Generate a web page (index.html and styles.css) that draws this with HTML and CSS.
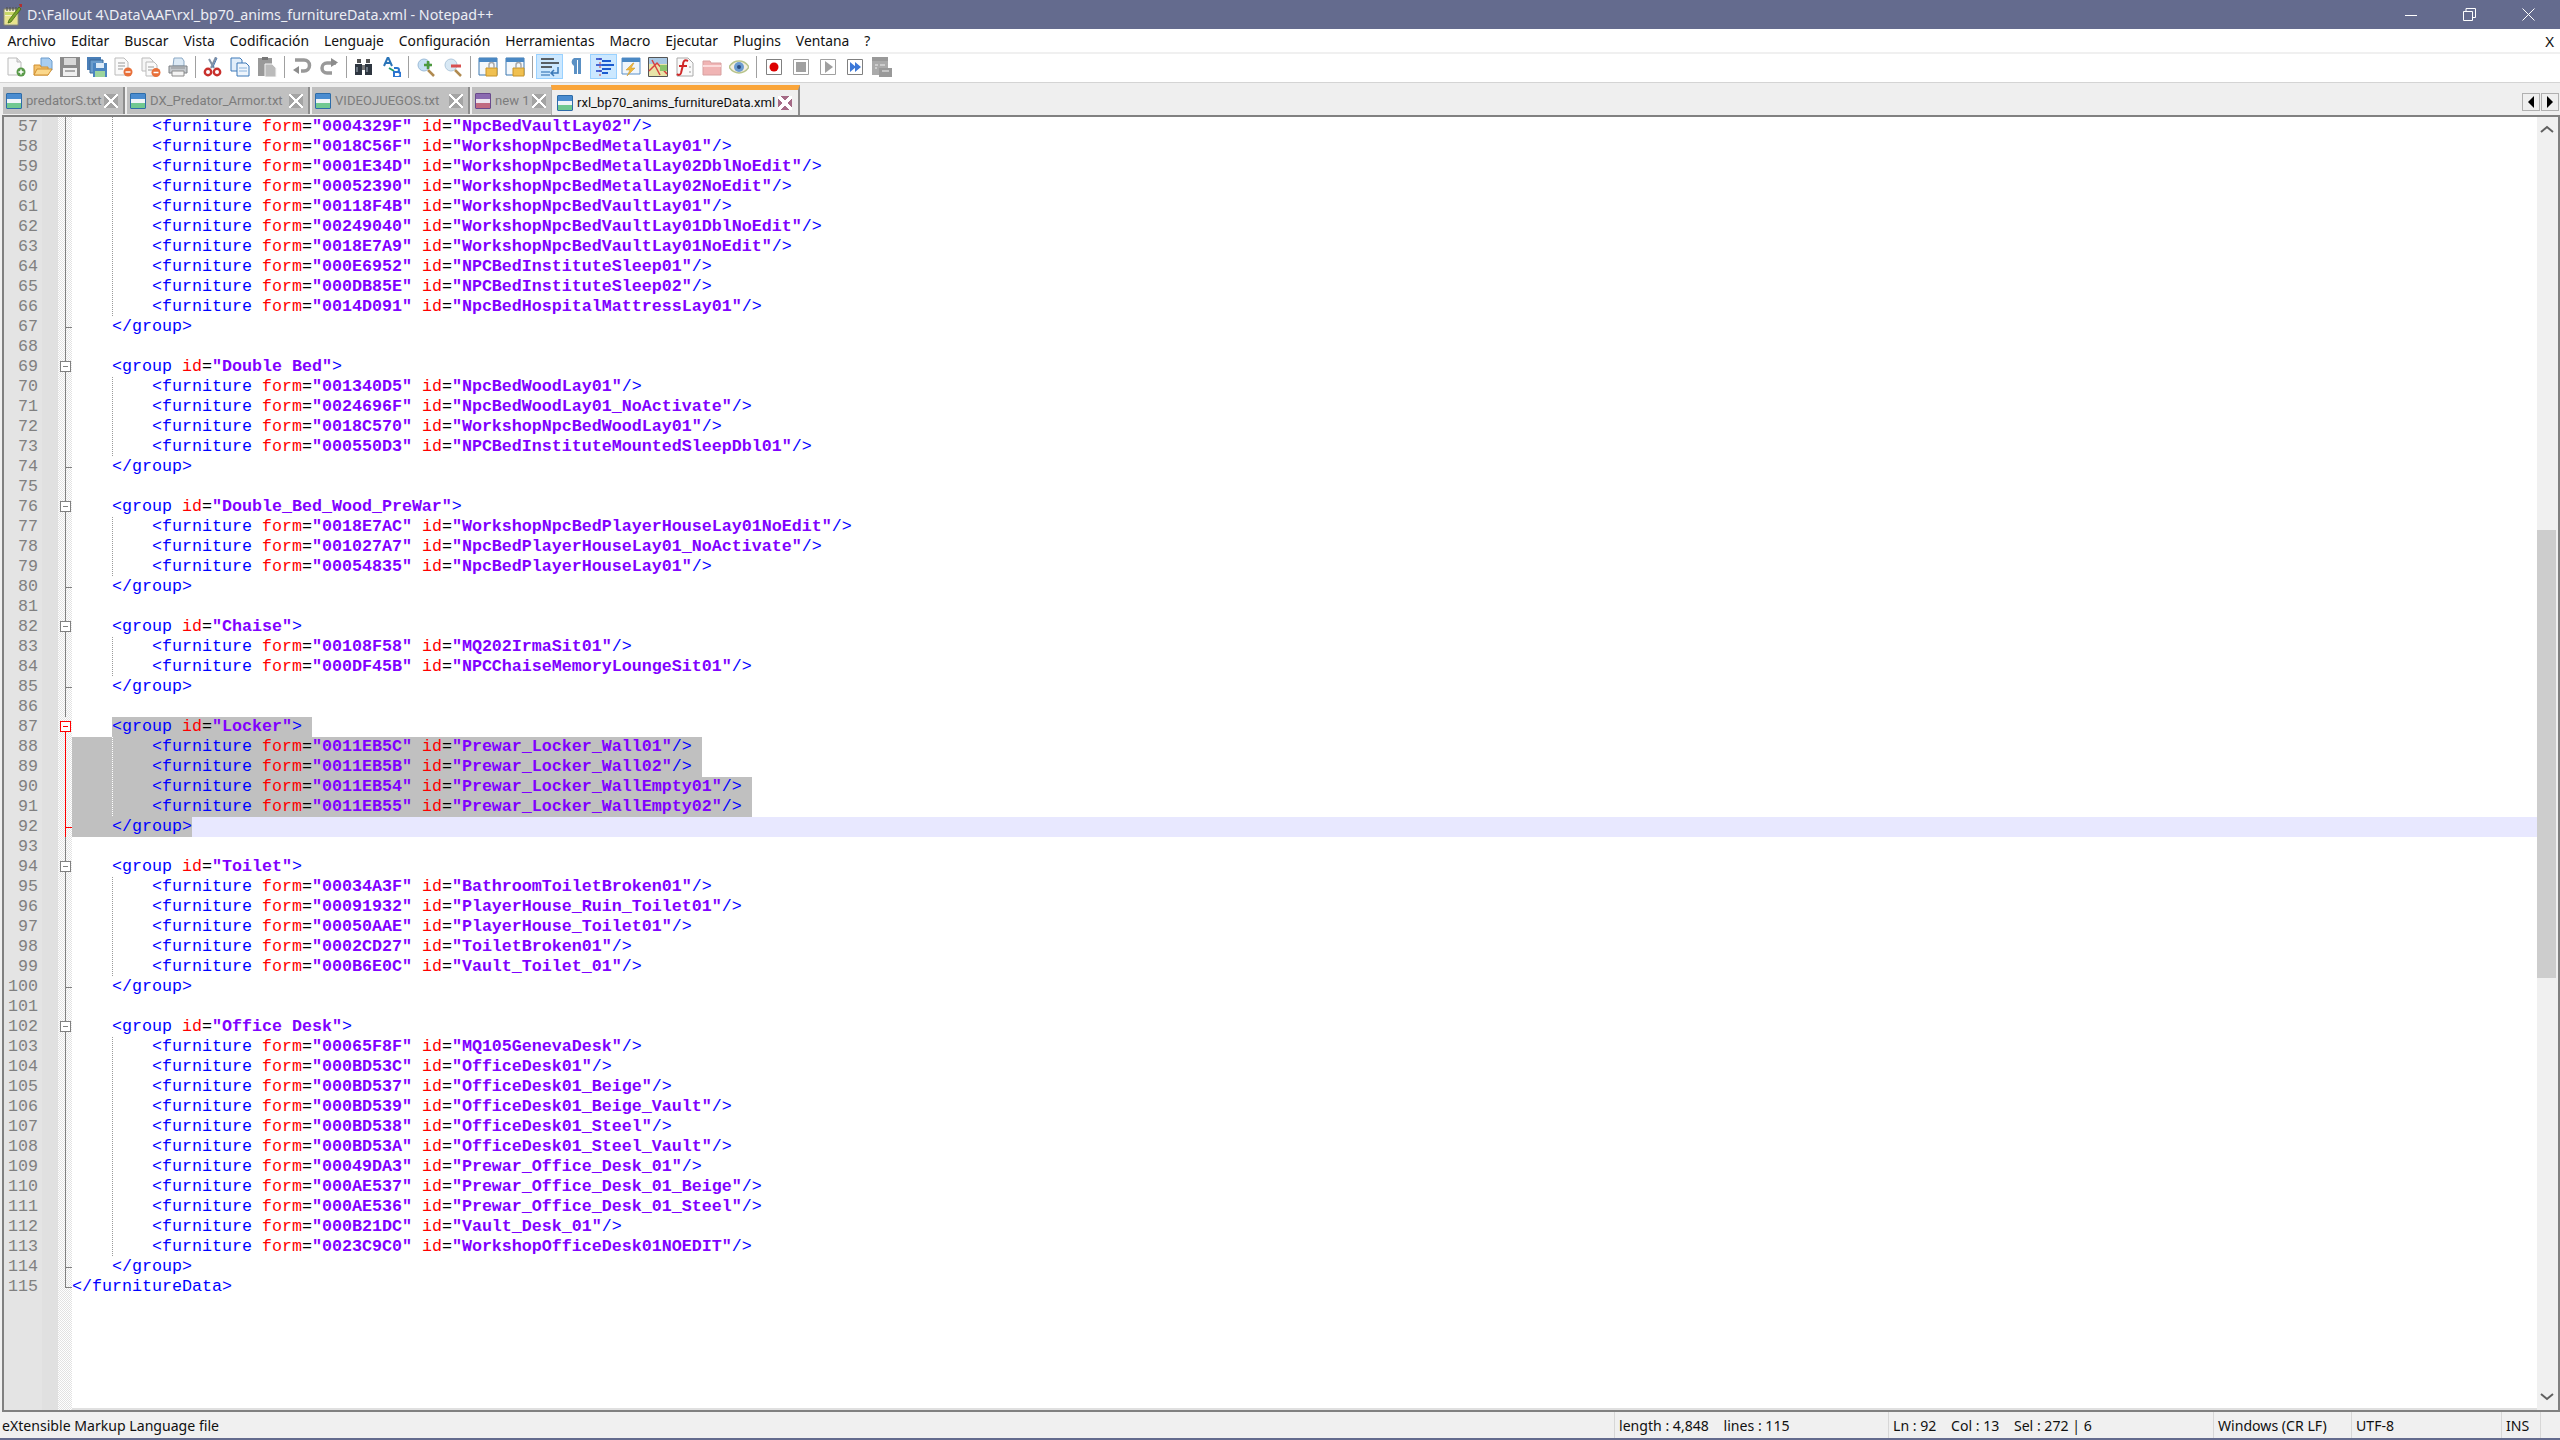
FILE: index.html
```html
<!DOCTYPE html>
<html lang="es">
<head>
    <meta charset="UTF-8">
    <title>rxl_bp70_anims_furnitureData.xml - Notepad++</title>
    <link rel="stylesheet" href="styles.css">
</head>
<body>
<div class="app">

    <!-- TITLE BAR -->
    <div class="titlebar">
        <svg class="app_icon" width="20" height="24" viewBox="0 0 20 24"><path d="M2 6h14v16H2z" fill="#f4f0c8" stroke="#8a8a60"/><path d="M3 9h12v3H3z" fill="#c8d868"/><path d="M3 13h12v8H3z" fill="#e8e48c"/><path d="M5 4v4M8 4v4M11 4v4M14 4v4" stroke="#555" stroke-width="1.2"/><path d="M7 17L17 4l2 2L9 19l-3 1z" fill="#7aa52a" stroke="#3c5c10" stroke-width=".7"/><path d="M17 1h3v3h-2z" fill="#b03030"/></svg>
        <span class="title_text">D:\Fallout 4\Data\AAF\rxl_bp70_anims_furnitureData.xml - Notepad++</span>
        <div class="win_btns">
            <svg width="12" height="12" viewBox="0 0 12 12"><path d="M0 6.5h12" stroke="#fff"/></svg>
            <svg width="13" height="13" viewBox="0 0 13 13"><path d="M.5 3.5h9v9h-9zM3 3.5V.5h9.500v9h-3" fill="none" stroke="#fff"/></svg>
            <svg width="13" height="13" viewBox="0 0 13 13"><path d="M.5.5l12 12M12.500.5l-12 12" stroke="#fff"/></svg>
        </div>
    </div>

    <!-- MENU -->
    <div class="menubar">
        <a>Archivo</a><a>Editar</a><a>Buscar</a><a>Vista</a><a>Codificación</a><a>Lenguaje</a><a>Configuración</a><a>Herramientas</a><a>Macro</a><a>Ejecutar</a><a>Plugins</a><a>Ventana</a><a>?</a>
        <span class="menu_x">X</span>
    </div>

    <!-- TOOLBAR -->
    <div class="toolbar">
        <span class="tb"><svg viewBox="0 0 20 20"><path d="M2 1h9l4 4v13H2z" fill="#fbfbfb" stroke="#bbb"/><path d="M11 1v4h4" fill="#e4e4e4" stroke="#bbb"/><circle cx="15" cy="15" r="4.500" fill="#5a9a4a"/><path d="M15 12.500v5M12.500 15h5" stroke="#fff" stroke-width="1.500"/></svg></span>
        <span class="tb"><svg viewBox="0 0 20 20"><path d="M8 1h8l3 3v9H8z" fill="#a8cdf0" stroke="#6c9ccc"/><path d="M1 8h6l1 2h7v8H1z" fill="#f4c26c" stroke="#d09030"/><path d="M1 18l3-6h15l-4 6z" fill="#fbd88c" stroke="#d09030"/></svg></span>
        <span class="tb"><svg viewBox="0 0 20 20"><path d="M0 0h20v20H0z" fill="#8c8c8c"/><path d="M4 1h12v7H4z" fill="#d8d8d8"/><path d="M3 11h14v8H3z" fill="#f0f0f0"/><path d="M5 14h10" stroke="#aaa" stroke-width="2"/></svg></span>
        <span class="tb"><svg viewBox="0 0 20 20"><path d="M0 0h14v13H0z" fill="#4a7fb8"/><path d="M3 3h13v13H3z" fill="#6a9ccc" stroke="#3a6a9c"/><path d="M6 6h14v14H6z" fill="#4a84c0"/><path d="M9 6h8v5H9z" fill="#dcebf8"/><path d="M8 14h10v6H8z" fill="#9cd49c"/></svg></span>
        <span class="tb"><svg viewBox="0 0 20 20"><path d="M1 1h9l4 4v13H1z" fill="#fafafa" stroke="#bbb"/><path d="M4 6h7M4 9h7M4 12h5" stroke="#999"/><circle cx="14" cy="15" r="4.500" fill="#e8703a"/><path d="M11.500 15h5" stroke="#fff" stroke-width="1.500"/></svg></span>
        <span class="tb"><svg viewBox="0 0 20 20"><path d="M1 1h8l3 3v10H1z" fill="#f6f6f6" stroke="#bbb"/><path d="M5 5h8l3 3v11H5z" fill="#fafafa" stroke="#bbb"/><path d="M7 10h6M7 13h4" stroke="#999"/><circle cx="15" cy="15.500" r="4.500" fill="#e8703a"/><path d="M12.500 15.500h5" stroke="#fff" stroke-width="1.500"/></svg></span>
        <span class="tb"><svg viewBox="0 0 20 20"><path d="M6 1h8l2 3v5H5z" fill="#dceaf6" stroke="#8aa8c4"/><path d="M1 9h18v7H1z" fill="#c4c8cc" stroke="#7c8084"/><path d="M4 14h12v5H4z" fill="#f4f4f4" stroke="#8c8c8c"/><path d="M3 11h14" stroke="#8c9094"/></svg></span>
        <span class="sep"></span>
        <span class="tb"><svg viewBox="0 0 20 20"><path d="M13 0L8 11M6 2l5 9" stroke="#8090a4" stroke-width="2"/><path d="M14 1l-4 9" stroke="#4a78b0"/><circle cx="5" cy="15" r="3.200" fill="none" stroke="#c8302c" stroke-width="2.400"/><circle cx="14" cy="15" r="3.200" fill="none" stroke="#c8302c" stroke-width="2.400"/></svg></span>
        <span class="tb"><svg viewBox="0 0 20 20"><path d="M1 1h9l2 2v11H1z" fill="#e2eefa" stroke="#3c78b8"/><path d="M7 6h9l3 3v10H7z" fill="#eef5fc" stroke="#3c78b8"/><path d="M9 11h8M9 14h8" stroke="#8cb4dc"/></svg></span>
        <span class="tb"><svg viewBox="0 0 20 20"><path d="M1 1h14v18H1z" fill="#999"/><path d="M5 0h6v3H5z" fill="#777"/><path d="M8 7h7l4 4v9H8z" fill="#bbb" stroke="#f4f4f4"/></svg></span>
        <span class="sep"></span>
        <span class="tb"><svg viewBox="0 0 20 20"><path d="M3 3h9a5 5 0 0 1 0 11H9" fill="none" stroke="#999" stroke-width="3.500"/><path d="M7 9v8l-6-4z" fill="#8c8c8c"/></svg></span>
        <span class="tb"><svg viewBox="0 0 20 20"><path d="M17 6H8a4.500 4.500 0 0 0 0 10h5" fill="none" stroke="#999" stroke-width="3.500"/><path d="M12 1v9l7-4.500z" fill="#8c8c8c"/></svg></span>
        <span class="sep"></span>
        <span class="tb"><svg viewBox="0 0 20 20"><path d="M3 2h4v4H3zM12 2h4v4h-4z" fill="#555"/><path d="M1 7h7v11H1zM11 7h7v11h-7z" fill="#2e3640"/><path d="M8 8h3v5H8z" fill="#777"/><path d="M3 10v5M13 10v5" stroke="#a8b4c0"/></svg></span>
        <span class="tb"><svg viewBox="0 0 20 20"><path d="M3 9L7 0l4 9M5 6h4" fill="none" stroke="#2a74b8" stroke-width="2"/><path d="M8 11l5 3" stroke="#1f9a70" stroke-width="2"/><path d="M13 11h3a2 2 0 0 1 0 4h-3v5h4a2.500 2.500 0 0 0 0-5" fill="none" stroke="#2a74d0" stroke-width="2"/></svg></span>
        <span class="sep"></span>
        <span class="tb"><svg viewBox="0 0 20 20"><circle cx="8" cy="8" r="6" fill="#c8e0f4" stroke="#9cbcd8"/><path d="M12 13l6 6" stroke="#b08a50" stroke-width="2.500"/><path d="M8 8h8M12 4v8" stroke="#4e9a3e" stroke-width="2.500"/></svg></span>
        <span class="tb"><svg viewBox="0 0 20 20"><circle cx="8" cy="8" r="6" fill="#d8e8f4" stroke="#b0c8dc"/><path d="M12 13l6 6" stroke="#b08a50" stroke-width="2.500"/><path d="M8 9h10" stroke="#d85050" stroke-width="3"/></svg></span>
        <span class="sep"></span>
        <span class="tb"><svg viewBox="0 0 20 20"><path d="M1 1h18v17H1z" fill="#f4f8fc" stroke="#3c78b0"/><path d="M1 1h18v4H1z" fill="#4a88c4"/><path d="M8 11h11v8H8z" fill="#f0c050" stroke="#c89428"/><path d="M11 11V8a2.500 2.500 0 0 1 5 0v3" fill="none" stroke="#aaa" stroke-width="1.500"/></svg></span>
        <span class="tb"><svg viewBox="0 0 20 20"><path d="M1 1h18v17H1z" fill="#f4f8fc" stroke="#3c78b0"/><path d="M1 1h18v4H1z" fill="#4a88c4"/><path d="M8 11h11v8H8z" fill="#f0c050" stroke="#c89428"/><path d="M11 11V8a2.500 2.500 0 0 1 5 0v3" fill="none" stroke="#aaa" stroke-width="1.500"/></svg></span>
        <span class="sep"></span>
        <span class="tb on"><svg viewBox="0 0 20 20"><path d="M1 2h13M1 6h18M1 10h11" stroke="#333" stroke-width="1.500"/><path d="M1 15h9M1 18h9" stroke="#5a90c8" stroke-width="1.500"/><path d="M18 10v6h-6M14 13l-3 3 3 3" fill="none" stroke="#3a78b8" stroke-width="1.500"/></svg></span>
        <span class="tb"><svg viewBox="0 0 20 20"><path d="M7 17V9a4.500 4.500 0 0 1 0-8h7v16h-3V3h-1v14z" fill="#5a90c4"/></svg></span>
        <span class="tb on"><svg viewBox="0 0 20 20"><path d="M6 1v18" stroke="#d04040" stroke-dasharray="2 2"/><path d="M2 2h6M2 8h6M2 14h6" stroke="#1c3cc8" stroke-width="1.500"/><path d="M8 4h9M8 8h15M8 12h9M8 16h6" stroke="#1c5cd0" stroke-width="2"/></svg></span>
        <span class="tb"><svg viewBox="0 0 20 20"><path d="M1 1h18v16H1z" fill="#f0f6fc" stroke="#5a90c8"/><path d="M1 1h18v4H1z" fill="#4a88c4"/><path d="M12 6L5 13h4l-3 6 8-8h-4l3-5z" fill="#f0b83c" stroke="#c89428" stroke-width=".5"/></svg></span>
        <span class="tb"><svg viewBox="0 0 20 20"><path d="M.500.500h19v19H.500z" fill="#e8e4a8" stroke="#555"/><path d="M1 1h18v6H1z" fill="#a8c8e4"/><path d="M1 14l8-8 10 11M4 3l8 15" fill="none" stroke="#d84040" stroke-width="1.500"/><path d="M12 8h7v6h-7z" fill="#8ac46c"/></svg></span>
        <span class="tb"><svg viewBox="0 0 20 20"><path d="M2 1h11l5 5v13H2z" fill="#fafafa" stroke="#aaa"/><path d="M13 4c-4-2-5 1-5 4l-2 8c-1 3-3 2-4 1M4 9h8" fill="none" stroke="#d02828" stroke-width="2"/><path d="M15 9v2M15 14v2" stroke="#999"/></svg></span>
        <span class="tb"><svg viewBox="0 0 20 20"><path d="M1 4h7l1 2h10v12H1z" fill="#f0b4b4" stroke="#d8a0a0"/><path d="M1 9h18" stroke="#fbdcdc" stroke-width="2"/></svg></span>
        <span class="tb"><svg viewBox="0 0 20 20"><path d="M0 10c5-8 15-8 20 0-5 8-15 8-20 0z" fill="#f4efe0" stroke="#b8c48c" stroke-width="1.500"/><circle cx="10" cy="10" r="5" fill="#6c9cd0"/><circle cx="10" cy="10" r="2" fill="#2c4c80"/></svg></span>
        <span class="sep"></span>
        <span class="tb"><svg viewBox="0 0 20 20"><path d="M2.500 2.500h15v15h-15z" fill="#fff" stroke="#808080"/><circle cx="10" cy="10" r="4.500" fill="#d00"/></svg></span>
        <span class="tb"><svg viewBox="0 0 20 20"><path d="M2.500 2.500h15v15h-15z" fill="#fff" stroke="#a0a0a0"/><path d="M5 5h10v10H5z" fill="#a0a0a0"/></svg></span>
        <span class="tb"><svg viewBox="0 0 20 20"><path d="M2.500 2.500h15v15h-15z" fill="#fff" stroke="#a0a0a0"/><path d="M7 4l8 6-8 6z" fill="#a0a0a0"/></svg></span>
        <span class="tb"><svg viewBox="0 0 20 20"><path d="M2.500 2.500h15v15h-15z" fill="#fff" stroke="#808080"/><path d="M5 5l6 5-6 5zM10 5l6 5-6 5z" fill="#3c78d8"/></svg></span>
        <span class="tb"><svg viewBox="0 0 20 20"><path d="M0 0h16v4H0z" fill="#999"/><path d="M0 4h16v14H0z" fill="#aaa"/><path d="M3 8h3M3 11h2M8 8h5" stroke="#eee"/><path d="M7 11h13v9H7z" fill="#999"/><path d="M10 14h7" stroke="#eee"/></svg></span>
    </div>

    <!-- TABS -->
    <div class="tabbar">
        <div class="tab t1"><span class="floppy"></span>predatorS.txt<span class="tab_x"></span></div>
        <div class="tab t2"><span class="floppy"></span>DX_Predator_Armor.txt<span class="tab_x"></span></div>
        <div class="tab t3"><span class="floppy"></span>VIDEOJUEGOS.txt<span class="tab_x"></span></div>
        <div class="tab t4"><span class="floppy dirty"></span>new 1<span class="tab_x"></span></div>
        <div class="tab active"><span class="floppy"></span>rxl_bp70_anims_furnitureData.xml<span class="tab_x"></span></div>
        <div class="tab_arrows">
            <span class="arrow"><svg width="6" height="12" viewBox="0 0 6 12"><path d="M6 0v12L0 6z"/></svg></span>
            <span class="arrow"><svg width="6" height="12" viewBox="0 0 6 12"><path d="M0 0v12l6-6z"/></svg></span>
        </div>
    </div>

    <!-- EDITOR -->
    <div class="editor">
        <div class="lines">
<div class="row in"><span class="num">57</span><span class="fold"></span><pre class="code">        <span class="t">&lt;furniture</span> <span class="a">form</span>=<span class="v">"0004329F"</span> <span class="a">id</span>=<span class="v">"NpcBedVaultLay02"</span><span class="t">/&gt;</span></pre></div>
<div class="row in"><span class="num">58</span><span class="fold"></span><pre class="code">        <span class="t">&lt;furniture</span> <span class="a">form</span>=<span class="v">"0018C56F"</span> <span class="a">id</span>=<span class="v">"WorkshopNpcBedMetalLay01"</span><span class="t">/&gt;</span></pre></div>
<div class="row in"><span class="num">59</span><span class="fold"></span><pre class="code">        <span class="t">&lt;furniture</span> <span class="a">form</span>=<span class="v">"0001E34D"</span> <span class="a">id</span>=<span class="v">"WorkshopNpcBedMetalLay02DblNoEdit"</span><span class="t">/&gt;</span></pre></div>
<div class="row in"><span class="num">60</span><span class="fold"></span><pre class="code">        <span class="t">&lt;furniture</span> <span class="a">form</span>=<span class="v">"00052390"</span> <span class="a">id</span>=<span class="v">"WorkshopNpcBedMetalLay02NoEdit"</span><span class="t">/&gt;</span></pre></div>
<div class="row in"><span class="num">61</span><span class="fold"></span><pre class="code">        <span class="t">&lt;furniture</span> <span class="a">form</span>=<span class="v">"00118F4B"</span> <span class="a">id</span>=<span class="v">"WorkshopNpcBedVaultLay01"</span><span class="t">/&gt;</span></pre></div>
<div class="row in"><span class="num">62</span><span class="fold"></span><pre class="code">        <span class="t">&lt;furniture</span> <span class="a">form</span>=<span class="v">"00249040"</span> <span class="a">id</span>=<span class="v">"WorkshopNpcBedVaultLay01DblNoEdit"</span><span class="t">/&gt;</span></pre></div>
<div class="row in"><span class="num">63</span><span class="fold"></span><pre class="code">        <span class="t">&lt;furniture</span> <span class="a">form</span>=<span class="v">"0018E7A9"</span> <span class="a">id</span>=<span class="v">"WorkshopNpcBedVaultLay01NoEdit"</span><span class="t">/&gt;</span></pre></div>
<div class="row in"><span class="num">64</span><span class="fold"></span><pre class="code">        <span class="t">&lt;furniture</span> <span class="a">form</span>=<span class="v">"000E6952"</span> <span class="a">id</span>=<span class="v">"NPCBedInstituteSleep01"</span><span class="t">/&gt;</span></pre></div>
<div class="row in"><span class="num">65</span><span class="fold"></span><pre class="code">        <span class="t">&lt;furniture</span> <span class="a">form</span>=<span class="v">"000DB85E"</span> <span class="a">id</span>=<span class="v">"NPCBedInstituteSleep02"</span><span class="t">/&gt;</span></pre></div>
<div class="row in"><span class="num">66</span><span class="fold"></span><pre class="code">        <span class="t">&lt;furniture</span> <span class="a">form</span>=<span class="v">"0014D091"</span> <span class="a">id</span>=<span class="v">"NpcBedHospitalMattressLay01"</span><span class="t">/&gt;</span></pre></div>
<div class="row"><span class="num">67</span><span class="fold tick"></span><pre class="code">    <span class="t">&lt;/group&gt;</span></pre></div>
<div class="row"><span class="num">68</span><span class="fold"></span><pre class="code"></pre></div>
<div class="row"><span class="num">69</span><span class="fold box"></span><pre class="code">    <span class="t">&lt;group</span> <span class="a">id</span>=<span class="v">"Double Bed"</span><span class="t">&gt;</span></pre></div>
<div class="row in"><span class="num">70</span><span class="fold"></span><pre class="code">        <span class="t">&lt;furniture</span> <span class="a">form</span>=<span class="v">"001340D5"</span> <span class="a">id</span>=<span class="v">"NpcBedWoodLay01"</span><span class="t">/&gt;</span></pre></div>
<div class="row in"><span class="num">71</span><span class="fold"></span><pre class="code">        <span class="t">&lt;furniture</span> <span class="a">form</span>=<span class="v">"0024696F"</span> <span class="a">id</span>=<span class="v">"NpcBedWoodLay01_NoActivate"</span><span class="t">/&gt;</span></pre></div>
<div class="row in"><span class="num">72</span><span class="fold"></span><pre class="code">        <span class="t">&lt;furniture</span> <span class="a">form</span>=<span class="v">"0018C570"</span> <span class="a">id</span>=<span class="v">"WorkshopNpcBedWoodLay01"</span><span class="t">/&gt;</span></pre></div>
<div class="row in"><span class="num">73</span><span class="fold"></span><pre class="code">        <span class="t">&lt;furniture</span> <span class="a">form</span>=<span class="v">"000550D3"</span> <span class="a">id</span>=<span class="v">"NPCBedInstituteMountedSleepDbl01"</span><span class="t">/&gt;</span></pre></div>
<div class="row"><span class="num">74</span><span class="fold tick"></span><pre class="code">    <span class="t">&lt;/group&gt;</span></pre></div>
<div class="row"><span class="num">75</span><span class="fold"></span><pre class="code"></pre></div>
<div class="row"><span class="num">76</span><span class="fold box"></span><pre class="code">    <span class="t">&lt;group</span> <span class="a">id</span>=<span class="v">"Double_Bed_Wood_PreWar"</span><span class="t">&gt;</span></pre></div>
<div class="row in"><span class="num">77</span><span class="fold"></span><pre class="code">        <span class="t">&lt;furniture</span> <span class="a">form</span>=<span class="v">"0018E7AC"</span> <span class="a">id</span>=<span class="v">"WorkshopNpcBedPlayerHouseLay01NoEdit"</span><span class="t">/&gt;</span></pre></div>
<div class="row in"><span class="num">78</span><span class="fold"></span><pre class="code">        <span class="t">&lt;furniture</span> <span class="a">form</span>=<span class="v">"001027A7"</span> <span class="a">id</span>=<span class="v">"NpcBedPlayerHouseLay01_NoActivate"</span><span class="t">/&gt;</span></pre></div>
<div class="row in"><span class="num">79</span><span class="fold"></span><pre class="code">        <span class="t">&lt;furniture</span> <span class="a">form</span>=<span class="v">"00054835"</span> <span class="a">id</span>=<span class="v">"NpcBedPlayerHouseLay01"</span><span class="t">/&gt;</span></pre></div>
<div class="row"><span class="num">80</span><span class="fold tick"></span><pre class="code">    <span class="t">&lt;/group&gt;</span></pre></div>
<div class="row"><span class="num">81</span><span class="fold"></span><pre class="code"></pre></div>
<div class="row"><span class="num">82</span><span class="fold box"></span><pre class="code">    <span class="t">&lt;group</span> <span class="a">id</span>=<span class="v">"Chaise"</span><span class="t">&gt;</span></pre></div>
<div class="row in"><span class="num">83</span><span class="fold"></span><pre class="code">        <span class="t">&lt;furniture</span> <span class="a">form</span>=<span class="v">"00108F58"</span> <span class="a">id</span>=<span class="v">"MQ202IrmaSit01"</span><span class="t">/&gt;</span></pre></div>
<div class="row in"><span class="num">84</span><span class="fold"></span><pre class="code">        <span class="t">&lt;furniture</span> <span class="a">form</span>=<span class="v">"000DF45B"</span> <span class="a">id</span>=<span class="v">"NPCChaiseMemoryLoungeSit01"</span><span class="t">/&gt;</span></pre></div>
<div class="row"><span class="num">85</span><span class="fold tick"></span><pre class="code">    <span class="t">&lt;/group&gt;</span></pre></div>
<div class="row"><span class="num">86</span><span class="fold"></span><pre class="code"></pre></div>
<div class="row"><span class="num">87</span><span class="fold box red"></span><pre class="code">    <span class="sel eol"><span class="t">&lt;group</span> <span class="a">id</span>=<span class="v">"Locker"</span><span class="t">&gt;</span></span></pre></div>
<div class="row in chosen"><span class="num">88</span><span class="fold red"></span><pre class="code"><span class="sel eol">        <span class="t">&lt;furniture</span> <span class="a">form</span>=<span class="v">"0011EB5C"</span> <span class="a">id</span>=<span class="v">"Prewar_Locker_Wall01"</span><span class="t">/&gt;</span></span></pre></div>
<div class="row in chosen"><span class="num">89</span><span class="fold red"></span><pre class="code"><span class="sel eol">        <span class="t">&lt;furniture</span> <span class="a">form</span>=<span class="v">"0011EB5B"</span> <span class="a">id</span>=<span class="v">"Prewar_Locker_Wall02"</span><span class="t">/&gt;</span></span></pre></div>
<div class="row in chosen"><span class="num">90</span><span class="fold red"></span><pre class="code"><span class="sel eol">        <span class="t">&lt;furniture</span> <span class="a">form</span>=<span class="v">"0011EB54"</span> <span class="a">id</span>=<span class="v">"Prewar_Locker_WallEmpty01"</span><span class="t">/&gt;</span></span></pre></div>
<div class="row in chosen"><span class="num">91</span><span class="fold red"></span><pre class="code"><span class="sel eol">        <span class="t">&lt;furniture</span> <span class="a">form</span>=<span class="v">"0011EB55"</span> <span class="a">id</span>=<span class="v">"Prewar_Locker_WallEmpty02"</span><span class="t">/&gt;</span></span></pre></div>
<div class="row current"><span class="num">92</span><span class="fold tick red"></span><pre class="code"><span class="sel">    <span class="t">&lt;/group&gt;</span></span></pre></div>
<div class="row"><span class="num">93</span><span class="fold"></span><pre class="code"></pre></div>
<div class="row"><span class="num">94</span><span class="fold box"></span><pre class="code">    <span class="t">&lt;group</span> <span class="a">id</span>=<span class="v">"Toilet"</span><span class="t">&gt;</span></pre></div>
<div class="row in"><span class="num">95</span><span class="fold"></span><pre class="code">        <span class="t">&lt;furniture</span> <span class="a">form</span>=<span class="v">"00034A3F"</span> <span class="a">id</span>=<span class="v">"BathroomToiletBroken01"</span><span class="t">/&gt;</span></pre></div>
<div class="row in"><span class="num">96</span><span class="fold"></span><pre class="code">        <span class="t">&lt;furniture</span> <span class="a">form</span>=<span class="v">"00091932"</span> <span class="a">id</span>=<span class="v">"PlayerHouse_Ruin_Toilet01"</span><span class="t">/&gt;</span></pre></div>
<div class="row in"><span class="num">97</span><span class="fold"></span><pre class="code">        <span class="t">&lt;furniture</span> <span class="a">form</span>=<span class="v">"00050AAE"</span> <span class="a">id</span>=<span class="v">"PlayerHouse_Toilet01"</span><span class="t">/&gt;</span></pre></div>
<div class="row in"><span class="num">98</span><span class="fold"></span><pre class="code">        <span class="t">&lt;furniture</span> <span class="a">form</span>=<span class="v">"0002CD27"</span> <span class="a">id</span>=<span class="v">"ToiletBroken01"</span><span class="t">/&gt;</span></pre></div>
<div class="row in"><span class="num">99</span><span class="fold"></span><pre class="code">        <span class="t">&lt;furniture</span> <span class="a">form</span>=<span class="v">"000B6E0C"</span> <span class="a">id</span>=<span class="v">"Vault_Toilet_01"</span><span class="t">/&gt;</span></pre></div>
<div class="row"><span class="num">100</span><span class="fold tick"></span><pre class="code">    <span class="t">&lt;/group&gt;</span></pre></div>
<div class="row"><span class="num">101</span><span class="fold"></span><pre class="code"></pre></div>
<div class="row"><span class="num">102</span><span class="fold box"></span><pre class="code">    <span class="t">&lt;group</span> <span class="a">id</span>=<span class="v">"Office Desk"</span><span class="t">&gt;</span></pre></div>
<div class="row in"><span class="num">103</span><span class="fold"></span><pre class="code">        <span class="t">&lt;furniture</span> <span class="a">form</span>=<span class="v">"00065F8F"</span> <span class="a">id</span>=<span class="v">"MQ105GenevaDesk"</span><span class="t">/&gt;</span></pre></div>
<div class="row in"><span class="num">104</span><span class="fold"></span><pre class="code">        <span class="t">&lt;furniture</span> <span class="a">form</span>=<span class="v">"000BD53C"</span> <span class="a">id</span>=<span class="v">"OfficeDesk01"</span><span class="t">/&gt;</span></pre></div>
<div class="row in"><span class="num">105</span><span class="fold"></span><pre class="code">        <span class="t">&lt;furniture</span> <span class="a">form</span>=<span class="v">"000BD537"</span> <span class="a">id</span>=<span class="v">"OfficeDesk01_Beige"</span><span class="t">/&gt;</span></pre></div>
<div class="row in"><span class="num">106</span><span class="fold"></span><pre class="code">        <span class="t">&lt;furniture</span> <span class="a">form</span>=<span class="v">"000BD539"</span> <span class="a">id</span>=<span class="v">"OfficeDesk01_Beige_Vault"</span><span class="t">/&gt;</span></pre></div>
<div class="row in"><span class="num">107</span><span class="fold"></span><pre class="code">        <span class="t">&lt;furniture</span> <span class="a">form</span>=<span class="v">"000BD538"</span> <span class="a">id</span>=<span class="v">"OfficeDesk01_Steel"</span><span class="t">/&gt;</span></pre></div>
<div class="row in"><span class="num">108</span><span class="fold"></span><pre class="code">        <span class="t">&lt;furniture</span> <span class="a">form</span>=<span class="v">"000BD53A"</span> <span class="a">id</span>=<span class="v">"OfficeDesk01_Steel_Vault"</span><span class="t">/&gt;</span></pre></div>
<div class="row in"><span class="num">109</span><span class="fold"></span><pre class="code">        <span class="t">&lt;furniture</span> <span class="a">form</span>=<span class="v">"00049DA3"</span> <span class="a">id</span>=<span class="v">"Prewar_Office_Desk_01"</span><span class="t">/&gt;</span></pre></div>
<div class="row in"><span class="num">110</span><span class="fold"></span><pre class="code">        <span class="t">&lt;furniture</span> <span class="a">form</span>=<span class="v">"000AE537"</span> <span class="a">id</span>=<span class="v">"Prewar_Office_Desk_01_Beige"</span><span class="t">/&gt;</span></pre></div>
<div class="row in"><span class="num">111</span><span class="fold"></span><pre class="code">        <span class="t">&lt;furniture</span> <span class="a">form</span>=<span class="v">"000AE536"</span> <span class="a">id</span>=<span class="v">"Prewar_Office_Desk_01_Steel"</span><span class="t">/&gt;</span></pre></div>
<div class="row in"><span class="num">112</span><span class="fold"></span><pre class="code">        <span class="t">&lt;furniture</span> <span class="a">form</span>=<span class="v">"000B21DC"</span> <span class="a">id</span>=<span class="v">"Vault_Desk_01"</span><span class="t">/&gt;</span></pre></div>
<div class="row in"><span class="num">113</span><span class="fold"></span><pre class="code">        <span class="t">&lt;furniture</span> <span class="a">form</span>=<span class="v">"0023C9C0"</span> <span class="a">id</span>=<span class="v">"WorkshopOfficeDesk01NOEDIT"</span><span class="t">/&gt;</span></pre></div>
<div class="row"><span class="num">114</span><span class="fold tick"></span><pre class="code">    <span class="t">&lt;/group&gt;</span></pre></div>
<div class="row"><span class="num">115</span><span class="fold last"></span><pre class="code"><span class="t">&lt;/furnitureData&gt;</span></pre></div>
<div class="row filler"><span class="num"></span><span class="fold end"></span><pre class="code"></pre></div>
        </div>
        <div class="scrollbar">
            <svg width="16" height="8" viewBox="0 0 16 8"><path d="M2 7l6-5 6 5" fill="none" stroke="#606060" stroke-width="2"/></svg>
            <div class="thumb"></div>
            <svg class="sb_down" width="16" height="8" viewBox="0 0 16 8"><path d="M2 1l6 5 6-5" fill="none" stroke="#606060" stroke-width="2"/></svg>
        </div>
    </div>

    <!-- STATUS BAR -->
    <div class="statusbar">
        <span class="cell type">eXtensible Markup Language file</span>
        <span class="cell len">length : 4,848    lines : 115</span>
        <span class="cell pos">Ln : 92    Col : 13    Sel : 272 | 6</span>
        <span class="cell eol_t">Windows (CR LF)</span>
        <span class="cell enc">UTF-8</span>
        <span class="cell ins">INS</span>
        <span class="cell grip"></span>
    </div>
    <div class="bottom_edge"></div>
</div>
</body>
</html>
```

FILE: styles.css
```css
html, body
{
    margin: 0;
    height: 100%;
    overflow: hidden;
}
body
{
    font-family: 'Noto Sans', 'Open Sans', sans-serif;
    background-color: #f0f0f0;
}
.app
{
    display: flex;
    flex-direction: column;
    height: 1440px;
}

/* title bar */
.titlebar
{
    height: 29px;
    flex: none;
    display: flex;
    align-items: center;
    background-color: #646b8e;
    color: #eceef4;
    font-size: 14.25px;
}
.app_icon
{
    margin: 0 5px 0 2px;
}
.title_text
{
    white-space: pre;
}
.win_btns
{
    margin-left: auto;
    display: flex;
    gap: 46px;
    padding-right: 25px;
    align-items: center;
}

/* menu */
.menubar
{
    height: 23px;
    flex: none;
    display: flex;
    align-items: center;
    background-color: #fff;
    font-size: 13.85px;
    color: #111;
}
.menubar a
{
    padding: 0 7.5px;
}
.menu_x
{
    margin-left: auto;
    margin-right: 6px;
    font-size: 15px;
}

/* toolbar */
.toolbar
{
    height: 28px;
    flex: none;
    margin-top: 2px;
    display: flex;
    align-items: flex-start;
    padding-left: 2px;
    background-color: #fff;
    border-bottom: 1px solid #d4d4d4;
}
.tb
{
    width: 27px;
    height: 25px;
    box-sizing: border-box;
    display: flex;
    align-items: center;
    justify-content: center;
}
.tb svg
{
    width: 20px;
    height: 20px;
    overflow: hidden;
}
.tb.on
{
    background-color: #cce8ff;
    border: 1px solid #99d1ff;
}
.sep
{
    width: 8px;
    height: 22px;
    margin-top: 2px;
    flex: none;
    background: linear-gradient(#a0a0a0, #a0a0a0) center / 1px 100% no-repeat;
}

/* tabs */
.tabbar
{
    height: 32px;
    flex: none;
    display: flex;
    align-items: flex-end;
    background-color: #efefef;
    padding-left: 3px;
    font-family: Roboto, sans-serif;
    font-size: 13.1px;
    position: relative;
}
.tab
{
    height: 27px;
    box-sizing: border-box;
    display: flex;
    align-items: center;
    background-color: #c0c0c0;
    color: #7c7c7c;
    padding-left: 3px;
    border-right: 2px solid #8e8e8e;
    margin-right: 2px;
    margin-bottom: 1px;
    white-space: pre;
}
.t1 { width: 122px; }
.t2 { width: 183px; }
.t3 { width: 158px; }
.t4 { width: 79px; margin-right: 0; border-right: 0; }
.tab.active
{
    width: 249px;
    height: 30px;
    margin: 0;
    background-color: #efefef;
    border-top: 5px solid #faa53a;
    border-left: 1px solid #b0b0b0;
    color: #111;
    padding-left: 5px;
}
.floppy
{
    width: 16px;
    height: 16px;
    flex: none;
    margin-right: 4px;
    box-sizing: border-box;
    border: 1px solid #2e6ca8;
    background: linear-gradient(#4a8cd0 0 5px, #f0f4f8 5px 9px, #70c890 9px);
    border-radius: 1px;
}
.floppy.dirty
{
    border-color: #6a4a8c;
    background: linear-gradient(#8a6ab0 0 5px, #ece6f0 5px 9px, #c06a80 9px);
}
.tab_x
{
    width: 14px;
    height: 14px;
    margin-left: auto;
    margin-right: 5px;
    flex: none;
    background:
        linear-gradient(45deg, transparent 44%, #fff 44% 56%, transparent 56%),
        linear-gradient(-45deg, transparent 44%, #fff 44% 56%, transparent 56%),
        #a4a4a4;
}
.active .tab_x
{
    background:
        linear-gradient(45deg, transparent 42%, #fff 42% 58%, transparent 58%),
        linear-gradient(-45deg, transparent 42%, #fff 42% 58%, transparent 58%),
        #a56a86;
    margin-right: 6px;
}
.tab_arrows
{
    margin-left: auto;
    margin-bottom: 4px;
    display: flex;
    gap: 1px;
    padding-right: 1px;
}
.arrow
{
    width: 18px;
    height: 18px;
    box-sizing: border-box;
    border: 1px solid #b0b0b0;
    display: flex;
    align-items: center;
    justify-content: center;
}

/* editor */
.editor
{
    flex: 1;
    min-height: 0;
    display: flex;
    margin-left: 2px;
    border-top: 2px solid #808080;
    border-left: 2px solid #808080;
    border-right: 2px solid #808080;
    border-bottom: 2px solid #808080;
    box-shadow: inset 0 -2px 0 #e0e0e0;
    background-color: #fff;
}
.lines
{
    flex: 1;
    min-width: 0;
    display: flex;
    flex-direction: column;
}
.row
{
    height: 20px;
    flex: none;
    display: flex;
    line-height: 20px;
    font-family: 'Liberation Mono', monospace;
    font-size: 16.66px;
}
.row.filler
{
    flex: 1;
}
.num
{
    width: 54px;
    flex: none;
    box-sizing: border-box;
    padding-right: 20px;
    text-align: right;
    color: #808080;
    background: linear-gradient(to right, #e4e4e4 38px, #e0e0e0 38px);
}
.fold
{
    width: 14px;
    flex: none;
    position: relative;
    background: repeating-conic-gradient(#e2e2e2 0 25%, #fff 0 50%) 0 0 / 2px 2px;
}
.fold::before
{
    content: "";
    position: absolute;
    left: 7px;
    top: 0;
    bottom: 0;
    width: 1px;
    background-color: #808080;
}
.fold.end::before
{
    display: none;
}
.fold.last::before
{
    bottom: 10px;
}
.fold.tick::after,
.fold.last::after
{
    content: "";
    position: absolute;
    left: 7px;
    right: 0;
    top: 10px;
    height: 1px;
    background-color: #808080;
}
.fold.box::after
{
    content: "";
    position: absolute;
    left: 2px;
    top: 4px;
    width: 11px;
    height: 11px;
    box-sizing: border-box;
    border: 1px solid #808080;
    background: linear-gradient(#808080, #808080) center / 5px 1px no-repeat, #fff;
}
.fold.red::before
{
    background-color: #f00;
}
.fold.red.tick::after
{
    background-color: #f00;
}
.fold.box.red::after
{
    border-color: #f00;
    background: linear-gradient(#f00, #f00) center / 5px 1px no-repeat, #fff;
}
.fold.box.red::before
{
    top: 15px;
}
.code
{
    flex: 1;
    margin: 0;
    font: inherit;
    white-space: pre;
    position: relative;
    color: #000;
}
/* indent guide */
.row.in .code::before
{
    content: "";
    position: absolute;
    left: 40px;
    top: 0;
    bottom: 0;
    width: 1px;
    background: repeating-linear-gradient(#9a9a9a 0 1px, transparent 1px 2px);
    z-index: 1;
}
.row.chosen .code::before
{
    background: repeating-linear-gradient(#fff 0 1px, transparent 1px 2px);
}
.t { color: #0000ff; }
.a { color: #ff0000; }
.v { color: #8000ff; font-weight: bold; }
.sel
{
    display: inline-block;
    height: 20px;
    background-color: #c0c0c0;
}
.sel.eol
{
    padding-right: 10px;
}
.row.current .code
{
    background-color: #e8e8ff;
}

/* scrollbar */
.scrollbar
{
    width: 21px;
    flex: none;
    display: flex;
    flex-direction: column;
    align-items: center;
    background-color: #f0f0f0;
    padding-top: 8px;
    padding-right: 2px;
    box-sizing: border-box;
}
.thumb
{
    width: 19px;
    height: 448px;
    margin-top: 397px;
    background-color: #cdcdcd;
}
.sb_down
{
    margin-top: auto;
    margin-bottom: 9px;
}

/* status bar */
.statusbar
{
    height: 26px;
    flex: none;
    display: flex;
    align-items: center;
    background-color: #f0f0f0;
    font-size: 14.1px;
    color: #111;
    white-space: pre;
}
.cell
{
    height: 100%;
    box-sizing: border-box;
    padding-left: 4px;
    display: flex;
    align-items: center;
    border-left: 1px solid #d7d7d7;
}
.cell.type { flex: 1; border-left: 0; padding-left: 2px; }
.cell.len { width: 274px; }
.cell.pos { width: 325px; }
.cell.eol_t { width: 138px; }
.cell.enc { width: 150px; }
.cell.ins { width: 39px; }
.cell.grip { width: 20px; }
.bottom_edge
{
    height: 2px;
    flex: none;
    background-color: #646b8e;
}
```
